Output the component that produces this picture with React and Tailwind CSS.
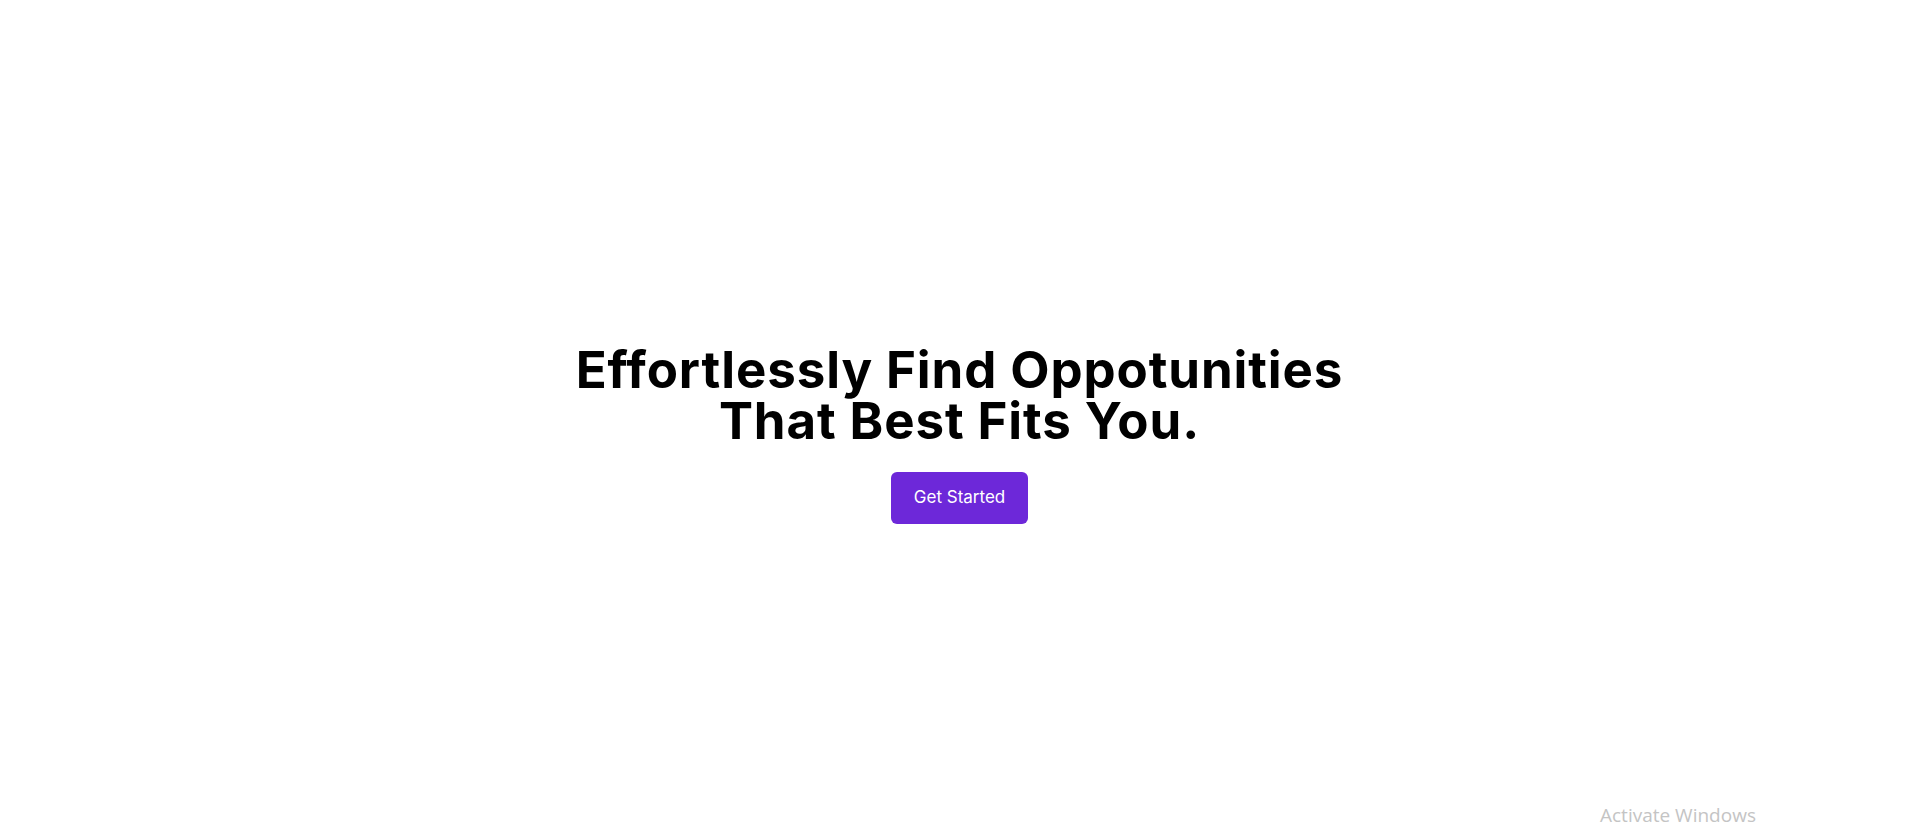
export default function App() {
  return (
    <div className="relative min-h-screen w-full bg-white font-['Inter',sans-serif] overflow-hidden">
      <div className="flex flex-col items-center pt-[344px]">
        <h1 className="text-center text-[51px] leading-[51px] font-bold text-black tracking-[0.9px] [font-variant-ligatures:none]">
          Effortlessly Find Oppotunities
          <br />
          That Best Fits You.
        </h1>
        <button className="mt-[26px] h-[52px] w-[137px] rounded-md bg-[#6d28d9] text-[17px] text-white">
          Get Started
        </button>
      </div>
      {/* windows watermark */}
      <div className="absolute left-[1600px] top-[801px] text-[19px] text-[#c4c4c4] font-['Open_Sans',sans-serif]">
        Activate Windows
      </div>
    </div>
  );
}
